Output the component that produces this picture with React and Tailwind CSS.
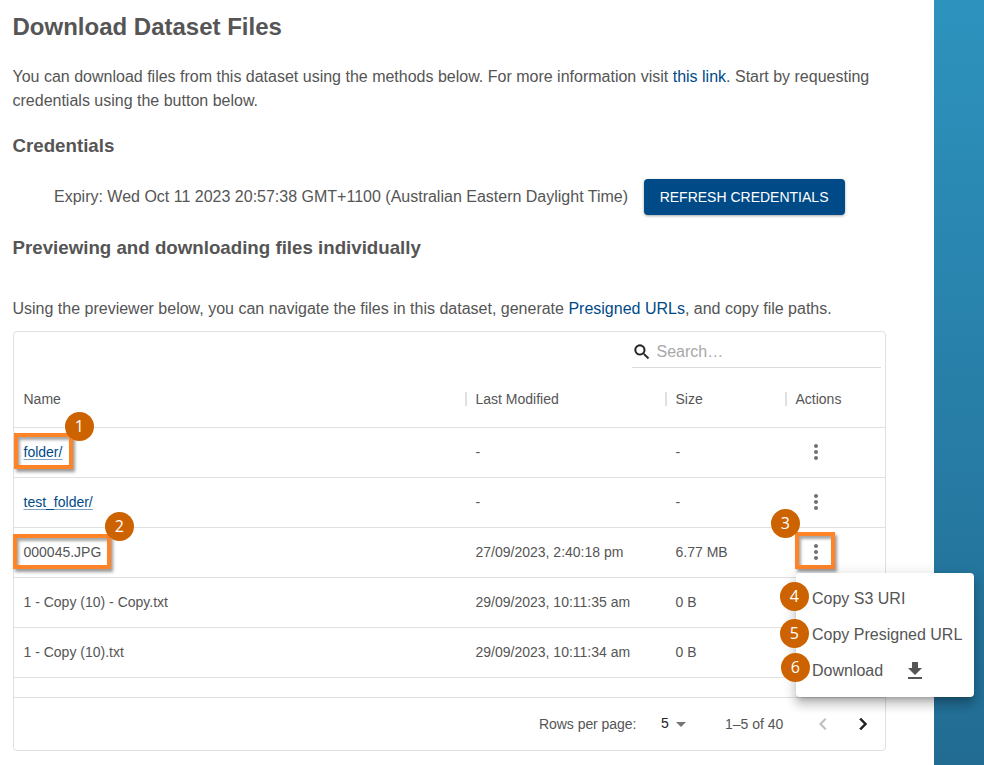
const rows = [
  { name: "folder/", link: true, modified: "-", size: "-" },
  { name: "test_folder/", link: true, modified: "-", size: "-" },
  { name: "000045.JPG", modified: "27/09/2023, 2:40:18 pm", size: "6.77 MB" },
  { name: "1 - Copy (10) - Copy.txt", modified: "29/09/2023, 10:11:35 am", size: "0 B" },
  { name: "1 - Copy (10).txt", modified: "29/09/2023, 10:11:34 am", size: "0 B" },
];

function Icon({ d, className }) {
  return (
    <svg viewBox="0 0 24 24" fill="currentColor" className={className}>
      <path d={d} />
    </svg>
  );
}

const MORE =
  "M12 8c1.1 0 2-.9 2-2s-.9-2-2-2-2 .9-2 2 .9 2 2 2zm0 2c-1.1 0-2 .9-2 2s.9 2 2 2 2-.9 2-2-.9-2-2-2zm0 6c-1.1 0-2 .9-2 2s.9 2 2 2 2-.9 2-2-.9-2-2-2z";
const SEARCH =
  "M15.5 14h-.79l-.28-.27C15.41 12.59 16 11.11 16 9.5 16 5.91 13.09 3 9.5 3S3 5.91 3 9.5 5.91 16 9.5 16c1.61 0 3.09-.59 4.23-1.57l.27.28v.79l5 4.99L20.49 19l-4.99-5zm-6 0C7.01 14 5 11.99 5 9.5S7.01 5 9.5 5 14 7.01 14 9.5 11.99 14 9.5 14z";
const DOWNLOAD = "M19 9h-4V3H9v6H5l7 7 7-7zM5 18v2h14v-2H5z";
const LEFT = "M15.41 7.41L14 6l-6 6 6 6 1.41-1.41L10.83 12z";
const RIGHT = "M10 6L8.59 7.41 13.17 12l-4.58 4.59L10 18l6-6z";

function Badge({ n, className }) {
  return (
    <div
      className={`absolute flex size-[29.5px] items-center justify-center rounded-full bg-[#cc6300] pb-px font-['Open_Sans',sans-serif] text-base leading-none font-medium text-white ${className}`}
    >
      {n}
    </div>
  );
}

function Frame({ className }) {
  return (
    <div
      className={`absolute border-4 border-[#ff8427] shadow-[2px_3px_3px_rgba(0,0,0,0.4),inset_2px_3px_3px_rgba(0,0,0,0.35)] ${className}`}
    />
  );
}

function HeadCell({ children, className }) {
  return (
    <div className={`flex items-center ${className}`}>
      <span className="mr-[8.5px] h-3.5 w-0.5 bg-[#e0e0e0]" />
      {children}
    </div>
  );
}

export default function App() {
  return (
    <div className="relative flex h-[765px] w-[984px] overflow-hidden bg-white font-['Liberation_Sans',Arial,sans-serif] text-base text-[#555]">
      <main className="h-full w-[934px] pl-[12.5px]">
        <h1 className="pt-[9px] text-2xl leading-9 font-bold">Download Dataset Files</h1>
        <p className="mt-5 w-[890px] leading-6">
          You can download files from this dataset using the methods below. For more information visit{" "}
          <a className="text-[#004a87]">this link</a>. Start by requesting
          <br />
          credentials using the button below.
        </p>
        <h2 className="mt-[18px] text-[18.72px] leading-[30px] font-bold">Credentials</h2>
        <div className="mt-[18px] ml-[41.5px] flex h-9 items-center">
          <span>Expiry: Wed Oct 11 2023 20:57:38 GMT+1100 (Australian Eastern Daylight Time)</span>
          <button className="ml-[15.5px] h-9 w-[201px] rounded bg-[#004a87] text-sm font-normal whitespace-nowrap text-white shadow-[0_1px_3px_rgba(0,0,0,0.35)]">
            REFRESH CREDENTIALS
          </button>
        </div>
        <h2 className="mt-[18px] text-[18.72px] leading-[30px] font-bold">
          Previewing and downloading files individually
        </h2>
        <p className="mt-[34px] leading-6">
          Using the previewer below, you can navigate the files in this dataset, generate{" "}
          <a className="text-[#004a87]">Presigned URLs</a>, and copy file paths.
        </p>

        <section className="mt-[10px] ml-[0.5px] h-[420px] w-[873px] rounded border border-[#e0e0e0] text-sm">
          <div className="flex h-[39px] justify-end pr-1">
            <div className="mt-1 flex h-8 w-[249px] items-center border-b border-[#dcdcdc]">
              <Icon d={SEARCH} className="size-5 stroke-current stroke-[0.3] text-[#222]" />
              <span className="ml-[4.5px] text-base text-[#a8a8a8]">Search…</span>
            </div>
          </div>
          <div className="flex h-[57px] items-center border-b border-[#e0e0e0]">
            <div className="w-[451px] pl-[9.5px]">Name</div>
            <HeadCell className="w-[200px]">Last Modified</HeadCell>
            <HeadCell className="w-[120px]">Size</HeadCell>
            <HeadCell>Actions</HeadCell>
          </div>
          {rows.map((r) => (
            <div key={r.name} className="flex h-[50px] items-center border-b border-[#e0e0e0] pb-0.5">
              <div className="w-[461.5px] pl-[9.5px]">
                {r.link ? (
                  <a className="text-[#004a87] underline decoration-[#7fa4c3] decoration-1 underline-offset-2">{r.name}</a>
                ) : (
                  r.name
                )}
              </div>
              <div className="w-[200px]">{r.modified}</div>
              <div className="w-[128.5px]">{r.size}</div>
              <Icon d={MORE} className="size-6 text-[#707070]" />
            </div>
          ))}
          <div className="h-5 border-b border-[#e0e0e0]" />
          <div className="flex h-[52px] items-center">
            <span className="ml-[525px] w-[122px] tracking-[-0.05px]">Rows per page:</span>
            <span className="w-[11px] pb-0.5 text-[#222]">5</span>
            <svg viewBox="0 0 10 5" className="ml-1 h-[5px] w-[10px] text-[#757575]" fill="currentColor">
              <path d="M0 0h10L5 5z" />
            </svg>
            <span className="ml-[39px] w-[86px]">1–5 of 40</span>
            <Icon d={LEFT} className="size-6 text-[#bdbdbd]" />
            <Icon d={RIGHT} className="ml-4 size-6 stroke-current stroke-[0.5] text-[#222]" />
          </div>
        </section>
      </main>
      <aside className="h-full w-[50px] bg-linear-to-b from-[#2d93be] to-[#226c93]" />

      <Frame className="top-[433px] left-[14px] h-9 w-[59px]" />
      <Frame className="top-[534px] left-[13px] h-[35px] w-[98px]" />
      <Frame className="top-[532px] left-[795px] h-[37px] w-10" />
      <div className="absolute top-[573px] left-[796px] flex h-[124px] w-[178px] flex-col rounded bg-white pt-2 pl-4 shadow-[0_5px_5px_-3px_rgba(0,0,0,0.2),0_8px_10px_1px_rgba(0,0,0,0.14),0_3px_14px_2px_rgba(0,0,0,0.12)]">
        <div className="flex h-9 items-center">Copy S3 URI</div>
        <div className="flex h-9 items-center whitespace-nowrap">Copy Presigned URL</div>
        <div className="flex h-9 items-center">
          <span className="w-[91px]">Download</span>
          <Icon d={DOWNLOAD} className="size-6" />
        </div>
      </div>
      <Badge n="1" className="top-[411.7px] left-[64.7px]" />
      <Badge n="2" className="top-[511.7px] left-[104.7px]" />
      <Badge n="3" className="top-[508.7px] left-[770.7px]" />
      <Badge n="4" className="top-[581.7px] left-[779.7px]" />
      <Badge n="5" className="top-[618.7px] left-[779.7px]" />
      <Badge n="6" className="top-[652.7px] left-[780.7px]" />
    </div>
  );
}
